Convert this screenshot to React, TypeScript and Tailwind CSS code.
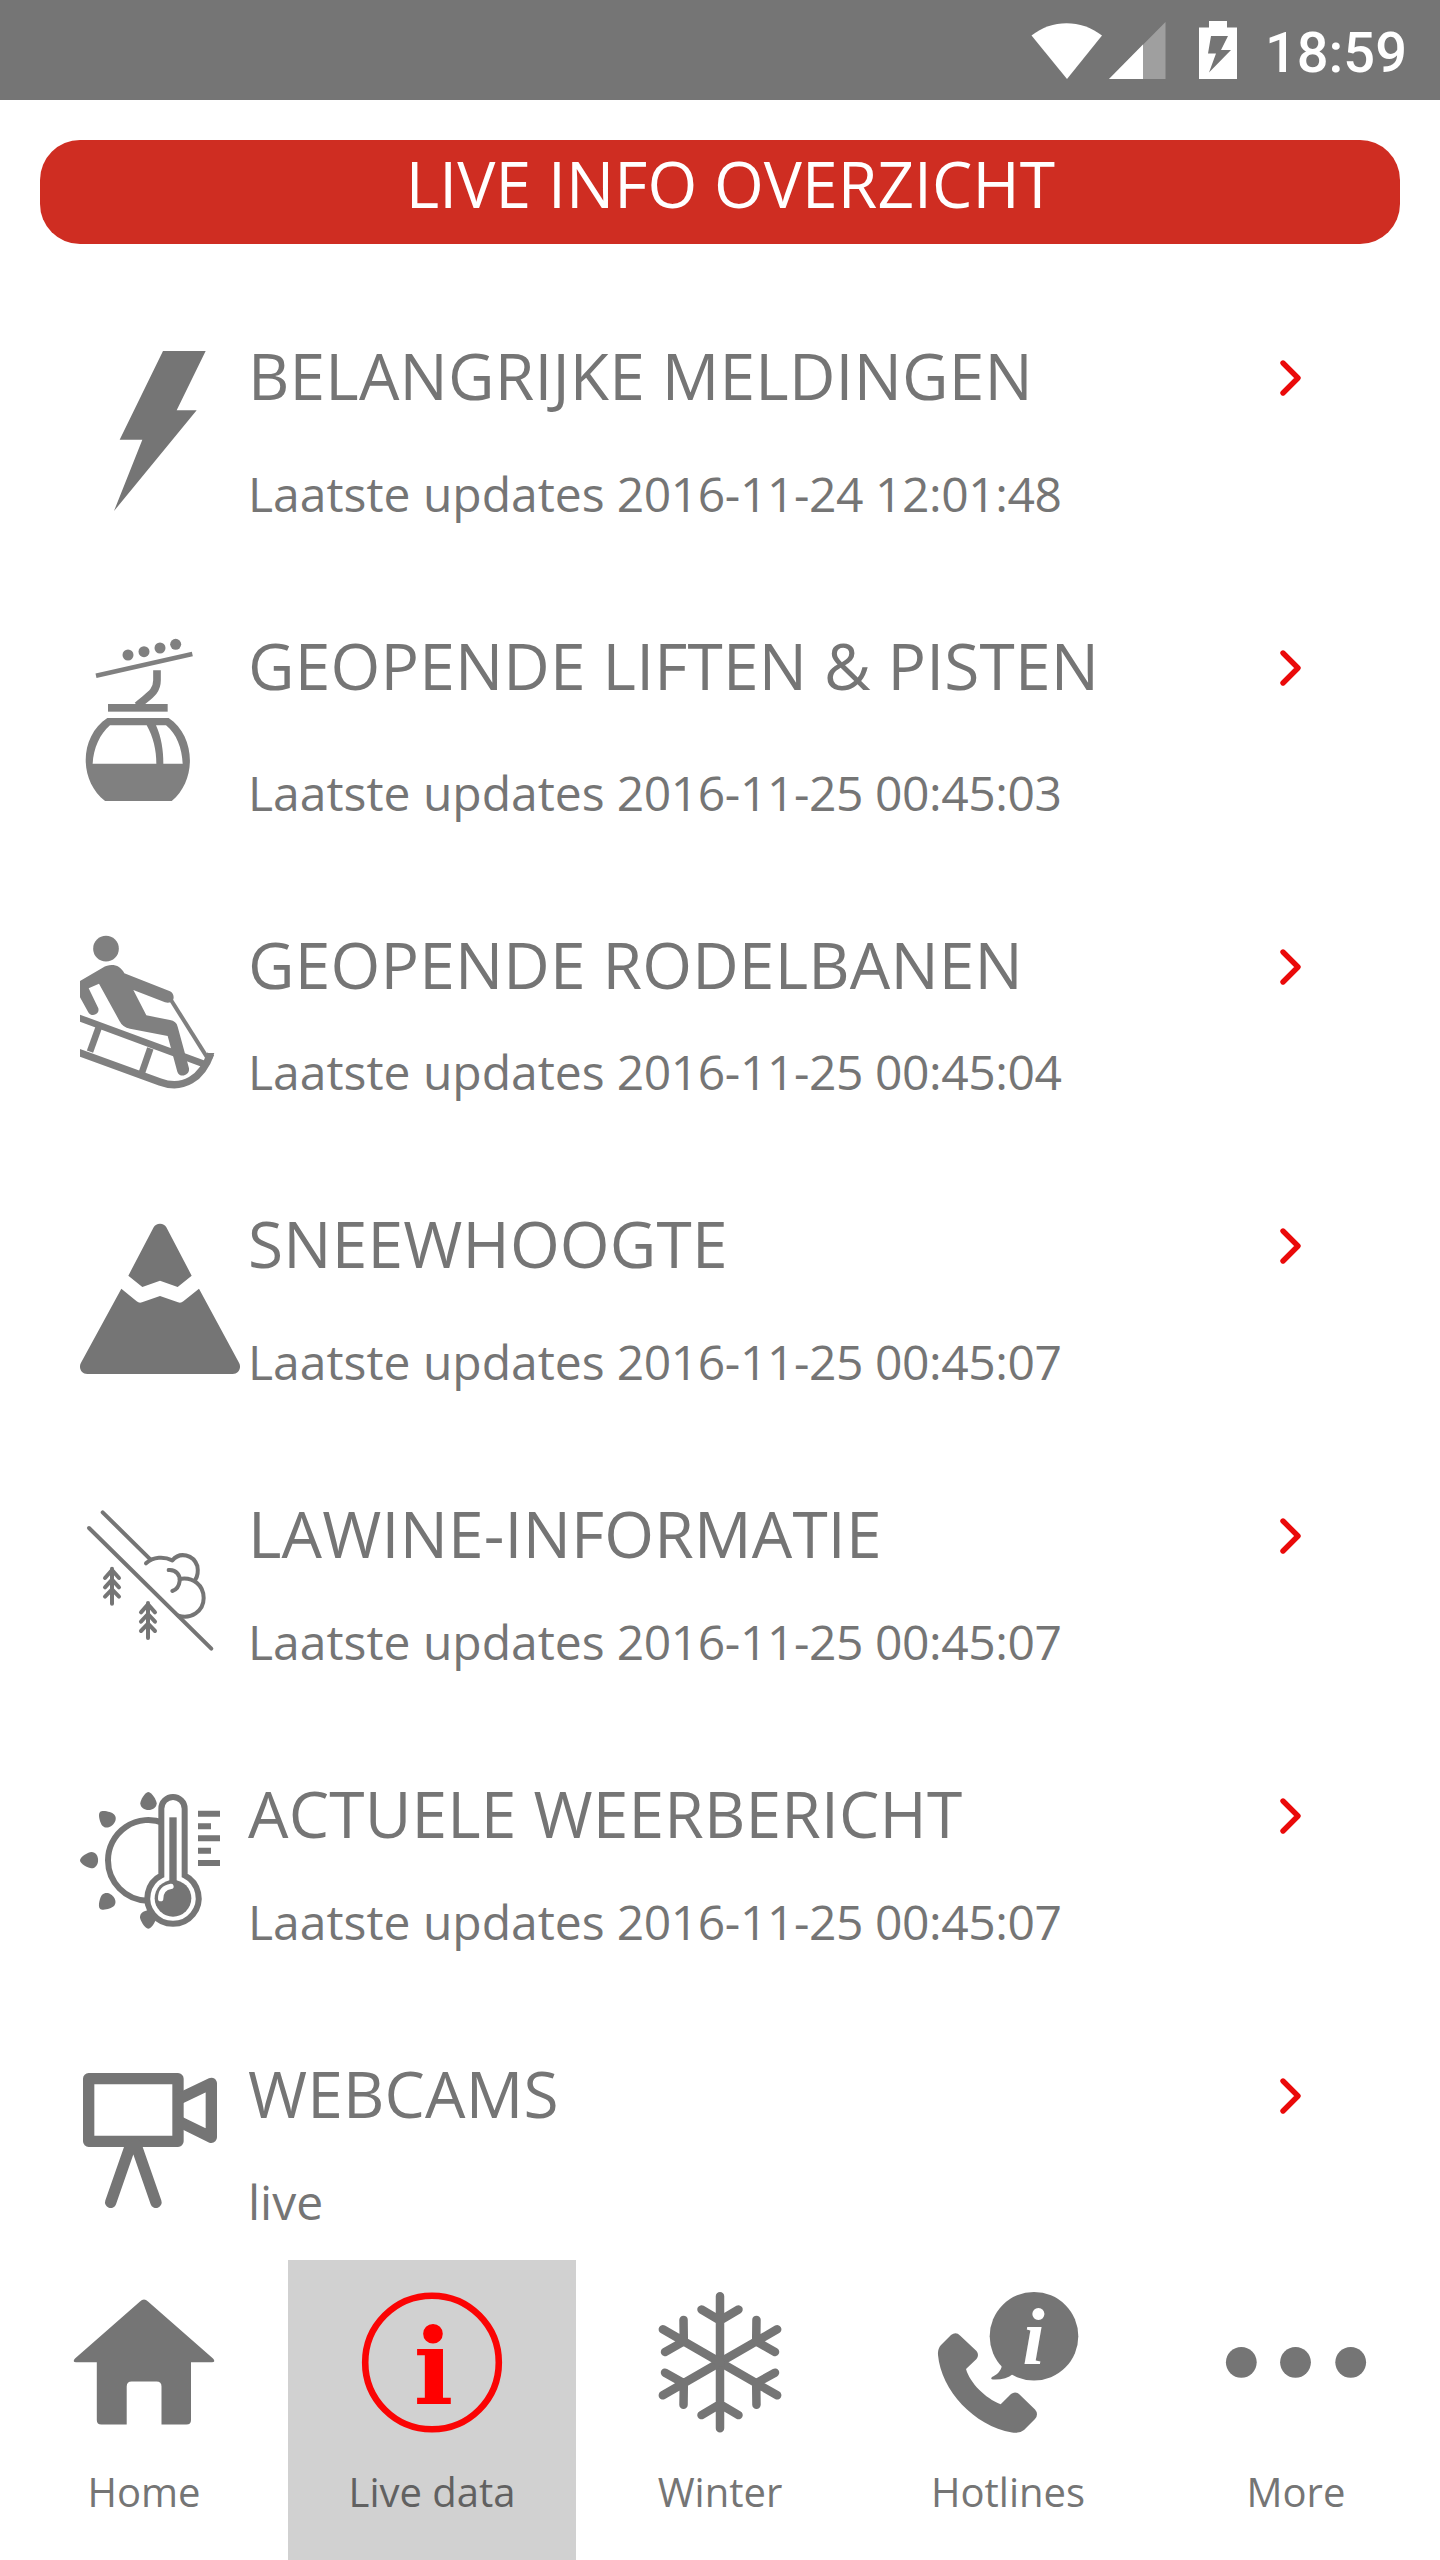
import type { ReactNode } from "react";

const GRAY = "#757575";
const SOFT_GRAY = "#808080";

// List icons share one 480x540 grid, drawn at a third of its size.
function ListIcon({ children }: { children: ReactNode }) {
  return (
    <svg viewBox="60 0 480 540" className="w-[160px] h-[180px] shrink-0 overflow-hidden" fill="none">
      {children}
    </svg>
  );
}

function BoltIcon() {
  return (
    <ListIcon>
      <path d="M309 60H437L350 238H410L162 540L247 326H179Z" fill={GRAY} />
    </ListIcon>
  );
}

function GondolaIcon() {
  return (
    <ListIcon>
      <g transform="translate(0 -2)">
        <g fill={SOFT_GRAY}>
          <circle cx="204" cy="104" r="16.500" />
          <circle cx="252" cy="94" r="16.500" />
          <circle cx="300" cy="83" r="16.500" />
          <circle cx="347" cy="72" r="16.500" />
          <rect x="144" y="251" width="179" height="23" />
          <path
            fillRule="evenodd"
            d="M142 293H326C411 350 411 490 326 549H145C55 490 55 350 142 293ZM150 315C120 340 100 385 98 430H289C289 390 280 350 260 315ZM288 315C304 350 310 390 310 430H368C366 385 350 340 318 315Z"
          />
        </g>
        <path d="M108 166L397 101" stroke={SOFT_GRAY} strokeWidth="14" />
        <path d="M291 150V180C291 218 262 228 232 256" stroke={SOFT_GRAY} strokeWidth="23" />
      </g>
    </ListIcon>
  );
}

function SledIcon() {
  return (
    <ListIcon>
      <g fill={SOFT_GRAY}>
        <circle cx="138" cy="86" r="38.5" />
        <path d="M60 183L128 143C150 129 180 132 193 160L330 214C343 220 345 240 333 246Q325 250 315 247L220 210L259 286L330 300Q349 303 353 320L387 445C390 468 358 475 352 455L323 348L210 326Q188 322 178 302L117 191L86 205L115 265C120 285 92 293 84 275L60 232Z" />
      </g>
      <g stroke={SOFT_GRAY} strokeWidth="20">
        <path d="M50 291L432 432" />
        <path d="M50 395L300 486C370 512 426 474 452 401" strokeWidth="22" />
        <path d="M117 320L90 395" />
        <path d="M271 385L245 460" />
        <path d="M333 240L440 410" strokeWidth="12" />
      </g>
      <path d="M442 399H463L455 420L436 414Z" fill={SOFT_GRAY} />
    </ListIcon>
  );
}

function MountainIcon() {
  return (
    <ListIcon>
      <g fill={GRAY} transform="translate(0 3)">
        <path d="M281 82Q287 71 300 71Q313 71 319 82L395 227L353 261L300 242L247 261L205 227Z" />
        <path d="M184 266L230 304Q237 310 246 307L300 288L354 307Q363 310 370 304L417 266L537 488C545 502 537 522 518 522H82C63 522 55 502 63 488Z" />
      </g>
    </ListIcon>
  );
}

function Tree() {
  return (
    <path d="M0 0V105M-21 28L0 4L21 28M-21 56L0 33L21 56M-21 84L0 62L21 84" />
  );
}

function AvalancheIcon() {
  return (
    <ListIcon>
      <g
        transform="translate(0 3)"
        stroke={GRAY}
        strokeWidth="12"
        strokeLinecap="round"
        strokeLinejoin="round"
      >
        <path d="M87 114L454 476" />
        <path d="M128 67L271 208" />
        <path d="M258 220C280 200 312 199 337 211C360 184 400 194 412 228C415 244 414 258 405 271" />
        <path d="M326 240C350 238 361 258 359 273C357 290 350 299 337 303" />
        <path d="M359 267C400 260 431 286 431 324C431 364 392 389 355 377" />
        <g transform="translate(156 236)"><Tree /></g>
        <g transform="translate(264 339)"><Tree /></g>
      </g>
    </ListIcon>
  );
}

function WeatherIcon() {
  return (
    <ListIcon>
      <g transform="translate(0 3)">
        {[0, -45, -90, -135, -180].map((angle) => (
          <path
            key={angle}
            d="M265 66C276 66 290 92 290 100C290 127 241 127 241 100C241 92 254 66 265 66Z"
            fill={GRAY}
            transform={`rotate(${angle} 265 271)`}
          />
        ))}
        <path
          d="M310 158.700A121 121 0 0 0 144 271A121 121 0 0 0 262 392"
          stroke={GRAY}
          strokeWidth="18"
        />
        <path
          d="M304 316V116A35 35 0 0 1 374 116V316A77 77 0 1 1 304 316Z"
          fill="white"
          stroke={GRAY}
          strokeWidth="18"
        />
        <rect x="328" y="142" width="22" height="200" fill={GRAY} />
        <circle cx="339" cy="385" r="55" fill={GRAY} />
        <path d="M302 386C302 364 314 352 333 349" stroke="white" strokeWidth="16" strokeLinecap="round" />
        <path
          d="M414 131.500H480M414 168.500H453M414 205H480M414 242.500H453M414 279H480"
          stroke={GRAY}
          strokeWidth="18"
        />
      </g>
    </ListIcon>
  );
}

function WebcamIcon() {
  return (
    <ListIcon>
      <g
        transform="translate(0 3)"
        stroke={GRAY}
        strokeWidth="34"
        strokeLinecap="round"
        strokeLinejoin="round"
      >
        <rect x="86" y="86" width="268" height="188" />
        <path d="M360 145L454 100V262L360 216" />
        <path d="M213 282L152 457M227 282L288 457" />
      </g>
    </ListIcon>
  );
}

function TabIcon({ children }: { children: ReactNode }) {
  return (
    <svg viewBox="0 0 140 140" className="w-[140px] h-[140px] overflow-visible" fill="none">
      {children}
    </svg>
  );
}

function HomeIcon() {
  return (
    <TabIcon>
      <path
        d="M66 9.500Q70 5.500 74 9.500L139 66.500Q142 70 138 70.300H117V128Q117 132.500 112.500 132.500H87.500V94.500Q87.500 89.500 82.500 89.500H57.700Q52.700 89.500 52.700 94.500V132.500H27.300Q22.800 132.500 22.800 128V70.300H2Q-2 70 1 66.500Z"
        fill={GRAY}
      />
    </TabIcon>
  );
}

function InfoIcon() {
  return (
    <TabIcon>
      <circle cx="70" cy="70.500" r="66.800" stroke="#fb0404" strokeWidth="6.600" />
      <text
        x="71.500"
        y="111.500"
        textAnchor="middle"
        fill="#ff0000"
        fontFamily="'DejaVu Serif', serif"
        fontWeight="700"
        fontSize="105"
      >
        i
      </text>
    </TabIcon>
  );
}

function SnowflakeIcon() {
  return (
    <TabIcon>
      <g stroke={GRAY} strokeWidth="8.500" strokeLinecap="round">
        {[0, 60, 120, 180, 240, 300].map((angle) => (
          <path
            key={angle}
            d="M70 70.300V4.300M51.500 17.500L70 28.500L88.500 17.500"
            transform={`rotate(${angle} 70 70.300)`}
          />
        ))}
      </g>
    </TabIcon>
  );
}

function HotlineIcon() {
  return (
    <TabIcon>
      <g fill={GRAY}>
        <circle cx="96" cy="44.300" r="44.300" />
        <path d="M64 73C63 80 58 83 54 85Q52 87 55 87.500C63 88 70 86 75 82Z" />
        <path d="M13 43Q18 39.500 22 43.500L38.500 59Q41.500 63 38.500 67L28 77C32 91 47 106 62.700 112.300L73 102Q77 99 81 102L97 117.500Q101 122 97 127L86 138Q82 141.500 74 140.500C36 134 3 98 0 63Q-.5 57 3 53Z" />
      </g>
      <text
        x="95.500"
        y="71.500"
        textAnchor="middle"
        fill="white"
        fontFamily="'Liberation Serif', serif"
        fontWeight="700"
        fontStyle="italic"
        fontSize="80"
      >
        i
      </text>
    </TabIcon>
  );
}

function MoreIcon() {
  return (
    <TabIcon>
      <g fill={GRAY}>
        <circle cx="15.300" cy="70.300" r="15.400" />
        <circle cx="69.500" cy="70.300" r="15.400" />
        <circle cx="124.700" cy="70.300" r="15.400" />
      </g>
    </TabIcon>
  );
}

const items = [
  { title: "BELANGRIJKE MELDINGEN", sub: "Laatste updates", date: "2016-11-24 12:01:48", icon: <BoltIcon />, height: "h-[290px]" },
  { title: "GEOPENDE LIFTEN & PISTEN", sub: "Laatste updates", date: "2016-11-25 00:45:03", icon: <GondolaIcon />, height: "h-[299px]" },
  { title: "GEOPENDE RODELBANEN", sub: "Laatste updates", date: "2016-11-25 00:45:04", icon: <SledIcon />, height: "h-[279px]" },
  { title: "SNEEWHOOGTE", sub: "Laatste updates", date: "2016-11-25 00:45:07", icon: <MountainIcon />, height: "h-[290px]" },
  { title: "LAWINE-INFORMATIE", sub: "Laatste updates", date: "2016-11-25 00:45:07", icon: <AvalancheIcon />, height: "h-[280px]" },
  { title: "ACTUELE WEERBERICHT", sub: "Laatste updates", date: "2016-11-25 00:45:07", icon: <WeatherIcon />, height: "h-[280px]" },
  { title: "WEBCAMS", sub: "live", icon: <WebcamIcon />, height: "h-[280px]" },
];

const tabs = [
  { label: "Home", icon: <HomeIcon /> },
  { label: "Live data", icon: <InfoIcon />, active: true },
  { label: "Winter", icon: <SnowflakeIcon /> },
  { label: "Hotlines", icon: <HotlineIcon /> },
  { label: "More", icon: <MoreIcon /> },
];

function StatusBar() {
  return (
    <div className="flex h-[100px] shrink-0 items-center justify-end bg-[#757575] pr-[33px]">
      <svg viewBox="0 0 210 60" className="mr-6 h-[60px] w-[210px]">
        <path d="M0.500 15.500C21 -1 50 -1 71 15.500L36 59Z" fill="white" />
        <path d="M134.500 2V59H78Z" fill="#9f9f9f" />
        <path d="M112 24.500V59H78Z" fill="white" />
        <path
          fillRule="evenodd"
          d="M178 1H196V7.500H206V59H168V7.500H178ZM180 16L177 33.500H185L178 52.500L200 30H190L197 16Z"
          fill="white"
        />
      </svg>
      <span className="pt-[5px] font-['Roboto'] text-[56px] font-medium leading-[64px] text-white">18:59</span>
    </div>
  );
}

export default function App() {
  return (
    <div className="flex h-[2560px] w-[1440px] flex-col overflow-hidden bg-white font-['Open_Sans',sans-serif] text-[#757575]">
      <StatusBar />

      <h1 className="mx-10 mt-10 h-[104px] shrink-0 rounded-[40px] bg-[#cf2d22] pl-[21px] text-center text-[64px] font-normal leading-[88px] tracking-[0.1px] text-white">
        LIVE INFO OVERZICHT
      </h1>

      {/* Overview list */}
      <ul className="mt-[87px] min-h-0 flex-1 overflow-hidden">
        {items.map((item) => (
          <li key={item.title} className={`flex pl-20 ${item.height}`}>
            {item.icon}
            <div className="flex flex-1 flex-col pb-[95px] pl-2 pt-px">
              <div className="flex items-center justify-between pr-[138px]">
                <span className="text-[64px] leading-[88px] tracking-[0.2px]">{item.title}</span>
                <svg viewBox="0 0 24 40" className="mt-[3px] h-10 w-6" fill="none">
                  <path
                    d="M5 5L20 20L5 35"
                    stroke="#ea0a0a"
                    strokeWidth="5.400"
                    strokeLinecap="round"
                    strokeLinejoin="round"
                  />
                </svg>
              </div>
              <span className="mt-auto text-[48px] leading-[64px]">
                {item.sub}
                {item.date && <span className="tracking-[-0.42px]"> {item.date}</span>}
              </span>
            </div>
          </li>
        ))}
      </ul>

      {/* Bottom tabs */}
      <nav className="grid h-[300px] shrink-0 grid-cols-5">
        {tabs.map((tab) => (
          <div
            key={tab.label}
            className={`flex flex-col items-center pt-8 ${tab.active ? "bg-[#d1d1d1] text-[#616161]" : ""}`}
          >
            {tab.icon}
            <span className="mt-8 text-[40px] leading-[56px]">{tab.label}</span>
          </div>
        ))}
      </nav>
    </div>
  );
}
